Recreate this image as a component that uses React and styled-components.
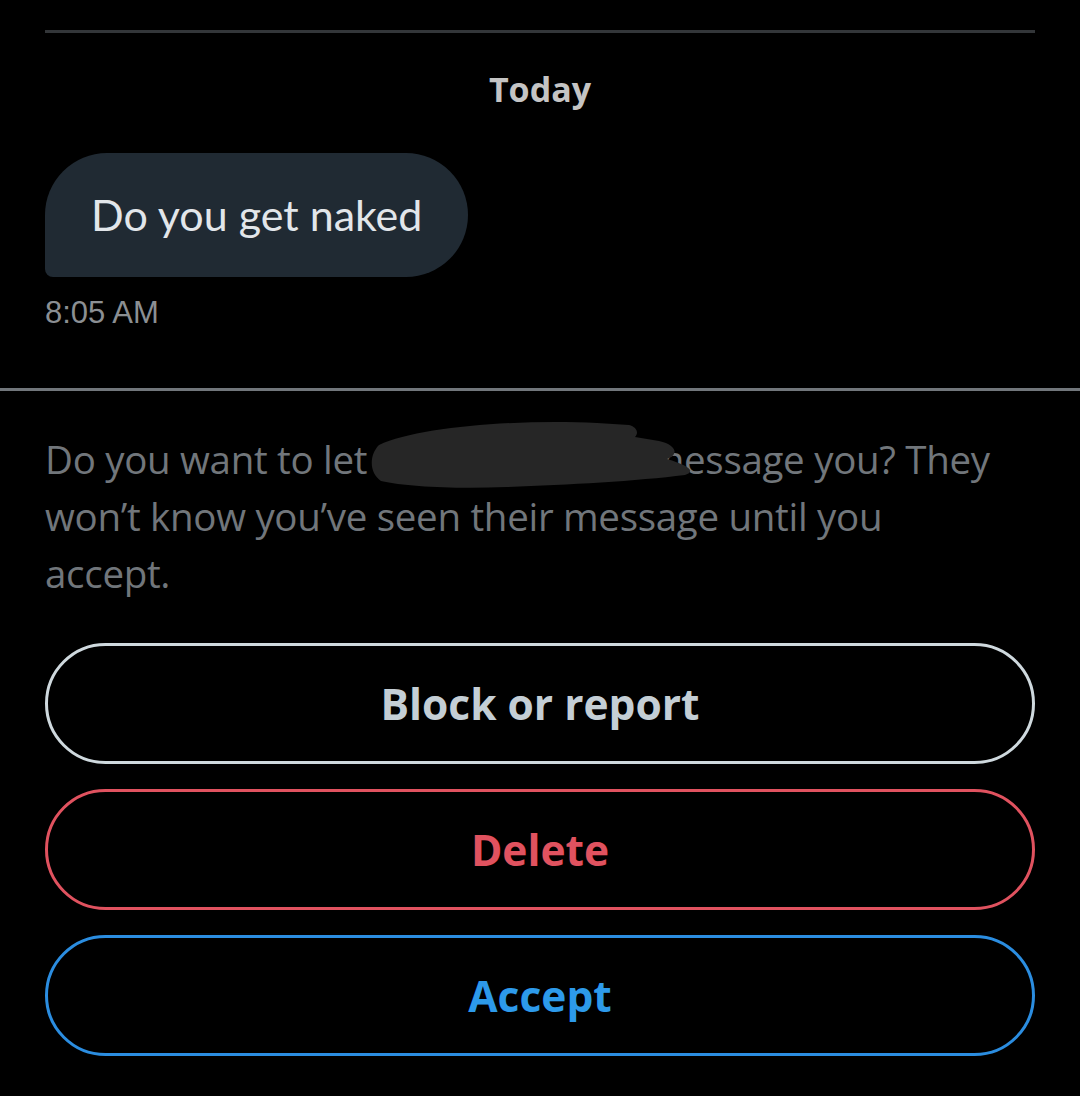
import React from 'react';
import styled, { createGlobalStyle } from 'styled-components';

const GlobalStyle = createGlobalStyle`
  html, body {
    margin: 0;
    padding: 0;
    background: #000;
  }
  body {
    font-family: "Open Sans", "Noto Sans", sans-serif;
  }
`

const Page = styled.div`
  background: #000;
  width: 1080px;
  height: 1096px;
  overflow: hidden;
`

const Thread = styled.div`
  padding: 30px 45px 0;
`

const TopRule = styled.div`
  height: 3px;
  background: #333639;
`

const DayLabel = styled.div`
  text-align: center;
  font-family: "Open Sans", sans-serif;
  font-weight: 700;
  font-size: 34px;
  color: #c4c4c4;
  margin-top: 36px;
  line-height: 40px;
`

const Bubble = styled.div`
  display: inline-block;
  margin-top: 44px;
  background: #202a33;
  color: #e2e6ea;
  font-family: Lato, sans-serif;
  font-size: 43px;
  line-height: 124px;
  height: 124px;
  padding: 0 46px;
  border-radius: 62px 62px 62px 8px;
`

const Time = styled.div`
  font-family: "Liberation Sans", Arial, sans-serif;
  font-size: 31px;
  color: #8b8f93;
  margin-top: 19px;
  line-height: 34px;
`

const Rule = styled.div`
  height: 3px;
  background: #71767b;
  margin-top: 58px;
`

const Request = styled.div`
  padding: 40px 45px 0;
`

const Notice = styled.p`
  position: relative;
  margin: 0;
  max-width: 960px;
  font-family: "Open Sans", sans-serif;
  font-size: 38.5px;
  line-height: 57px;
  color: #71767b;
  letter-spacing: -0.3px;
`

const Hidden = styled.span`
  display: inline-block;
  width: 262px;
`

const Scribble = styled.svg`
  position: absolute;
  left: 322px;
  top: -16px;
`

const Actions = styled.div`
  display: flex;
  flex-direction: column;
  gap: 25px;
  margin-top: 41px;
`

const Pill = styled.button`
  height: 121px;
  border-radius: 61px;
  background: transparent;
  border: 3px solid ${p => p.$tone};
  color: ${p => p.$text || p.$tone};
  font-family: "Open Sans", sans-serif;
  font-weight: 700;
  font-size: 42.5px;
  display: flex;
  align-items: center;
  justify-content: center;
  padding: 0;
`

function App() {
  return (
    <Page>
      <GlobalStyle />
      <Thread>
        <TopRule />
        <DayLabel>Today</DayLabel>
        <Bubble>Do you get naked</Bubble>
        <Time>8:05 AM</Time>
      </Thread>
      <Rule />
      <Request>
        <Notice>
          Do you want to let <Hidden /> message you? They won’t know you’ve seen their message until you accept.
          <Scribble width="330" height="76" viewBox="0 0 330 76">
            <path
              d="M12 30 C 50 12, 150 4, 230 8 L 262 10 C 270 12, 272 18, 268 22 L 292 26 C 310 30, 312 40, 300 44 C 320 50, 330 56, 318 60 C 270 66, 200 70, 140 72 C 90 74, 40 72, 14 66 C 2 58, 2 40, 12 30 Z"
              fill="#262626"
            />
          </Scribble>
        </Notice>
        <Actions>
          <Pill $tone="#cfd9de" $text="#c4ced5">Block or report</Pill>
          <Pill $tone="#e0525f">Delete</Pill>
          <Pill $tone="#2b8de0" $text="#2d9aea">Accept</Pill>
        </Actions>
      </Request>
    </Page>
  );
}

export default App;
